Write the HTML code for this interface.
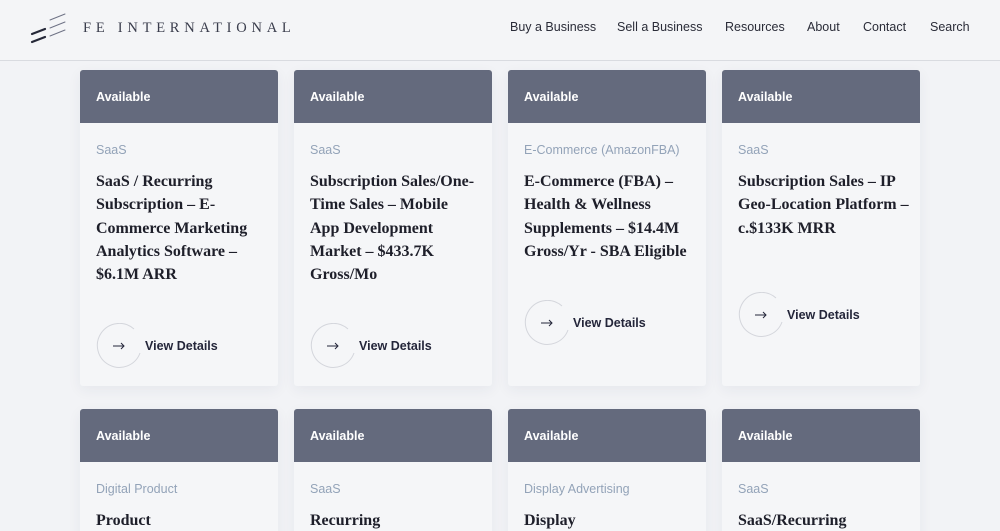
<!DOCTYPE html>
<html><head><meta charset="utf-8"><style>
*{margin:0;padding:0;box-sizing:border-box}
html,body{width:1000px;height:531px;overflow:hidden}
body{background:#f2f3f6;font-family:"Liberation Sans",sans-serif;position:relative}
.hdr{position:absolute;left:0;top:0;width:1000px;height:61px;border-bottom:1px solid #d9dbe0;background:#f4f5f7}
.logo{position:absolute;left:30px;top:13px}
.brand{position:absolute;left:83px;top:20px;font-family:"Liberation Serif",serif;font-size:14.5px;letter-spacing:4.75px;color:#3a3d4c}
.nav{position:absolute;top:20px;font-size:12.5px;color:#2a2c38}
.card{position:absolute;width:198px;background:#f5f6f8;border-radius:3px;box-shadow:0 4px 14px rgba(40,50,80,.06);overflow:hidden}
.bar{height:53px;background:#646a7d;color:#fff;font-weight:bold;font-size:12.5px;padding:20px 0 0 16px}
.cat{position:absolute;left:16px;top:73px;font-size:12.5px;color:#93a3b8}
.t{position:absolute;left:16px;top:100px;width:168px;font-family:"Liberation Serif",serif;font-weight:bold;font-size:16px;line-height:23.3px;color:#1e1f2a}
.vd{position:absolute;left:16px;width:170px;height:46px}
.vd svg{position:absolute;left:0;top:0}
.vd span{position:absolute;left:49px;top:16px;font-weight:bold;font-size:12.5px;color:#24263a}
</style></head><body>
<div class="hdr">
<svg class="logo" width="40" height="34" viewBox="0 0 40 34"><g stroke-linecap="round"><line x1="20" y1="7" x2="35" y2="1" stroke="#6e7285" stroke-width="1"/><line x1="20" y1="15" x2="35" y2="9" stroke="#6e7285" stroke-width="1"/><line x1="20" y1="23" x2="35" y2="17" stroke="#6e7285" stroke-width="1"/><line x1="2" y1="21" x2="15" y2="16" stroke="#252838" stroke-width="2.2"/><line x1="2" y1="29" x2="15" y2="24" stroke="#252838" stroke-width="2.2"/></g></svg>
<div class="brand">FE INTERNATIONAL</div>
<div class="nav" style="left:510px">Buy a Business</div>
<div class="nav" style="left:617px">Sell a Business</div>
<div class="nav" style="left:725px">Resources</div>
<div class="nav" style="left:807px">About</div>
<div class="nav" style="left:863px">Contact</div>
<div class="nav" style="left:930px">Search</div>
</div>

<div class="card" style="left:80px;top:70px;height:316px"><div class="bar">Available</div><div class="cat">SaaS</div><div class="t">SaaS / Recurring Subscription – E-Commerce Marketing Analytics Software – $6.1M ARR</div><div class="vd" style="top:253px"><svg width="46" height="46"><path d="M38 6 A22 22 0 1 0 44 30" fill="none" stroke="#d4d6dc" stroke-width="1"/><path d="M17 23 H28 M25 20 L28 23 L25 26" fill="none" stroke="#24263a" stroke-width="1"/></svg><span>View Details</span></div></div>

<div class="card" style="left:294px;top:70px;height:316px"><div class="bar">Available</div><div class="cat">SaaS</div><div class="t">Subscription Sales/One-Time Sales – Mobile App Development Market – $433.7K Gross/Mo</div><div class="vd" style="top:253px"><svg width="46" height="46"><path d="M38 6 A22 22 0 1 0 44 30" fill="none" stroke="#d4d6dc" stroke-width="1"/><path d="M17 23 H28 M25 20 L28 23 L25 26" fill="none" stroke="#24263a" stroke-width="1"/></svg><span>View Details</span></div></div>

<div class="card" style="left:508px;top:70px;height:316px"><div class="bar">Available</div><div class="cat">E-Commerce (AmazonFBA)</div><div class="t">E-Commerce (FBA) – Health &amp; Wellness Supplements – $14.4M Gross/Yr - SBA Eligible</div><div class="vd" style="top:230px"><svg width="46" height="46"><path d="M38 6 A22 22 0 1 0 44 30" fill="none" stroke="#d4d6dc" stroke-width="1"/><path d="M17 23 H28 M25 20 L28 23 L25 26" fill="none" stroke="#24263a" stroke-width="1"/></svg><span>View Details</span></div></div>

<div class="card" style="left:722px;top:70px;height:316px"><div class="bar">Available</div><div class="cat">SaaS</div><div class="t" style="width:178px">Subscription Sales – IP Geo-Location Platform – c.$133K MRR</div><div class="vd" style="top:222px"><svg width="46" height="46"><path d="M38 6 A22 22 0 1 0 44 30" fill="none" stroke="#d4d6dc" stroke-width="1"/><path d="M17 23 H28 M25 20 L28 23 L25 26" fill="none" stroke="#24263a" stroke-width="1"/></svg><span>View Details</span></div></div>

<div class="card" style="left:80px;top:409px;height:140px"><div class="bar">Available</div><div class="cat">Digital Product</div><div class="t">Product</div></div>
<div class="card" style="left:294px;top:409px;height:140px"><div class="bar">Available</div><div class="cat">SaaS</div><div class="t">Recurring</div></div>
<div class="card" style="left:508px;top:409px;height:140px"><div class="bar">Available</div><div class="cat">Display Advertising</div><div class="t">Display</div></div>
<div class="card" style="left:722px;top:409px;height:140px"><div class="bar">Available</div><div class="cat">SaaS</div><div class="t">SaaS/Recurring</div></div>
</body></html>
